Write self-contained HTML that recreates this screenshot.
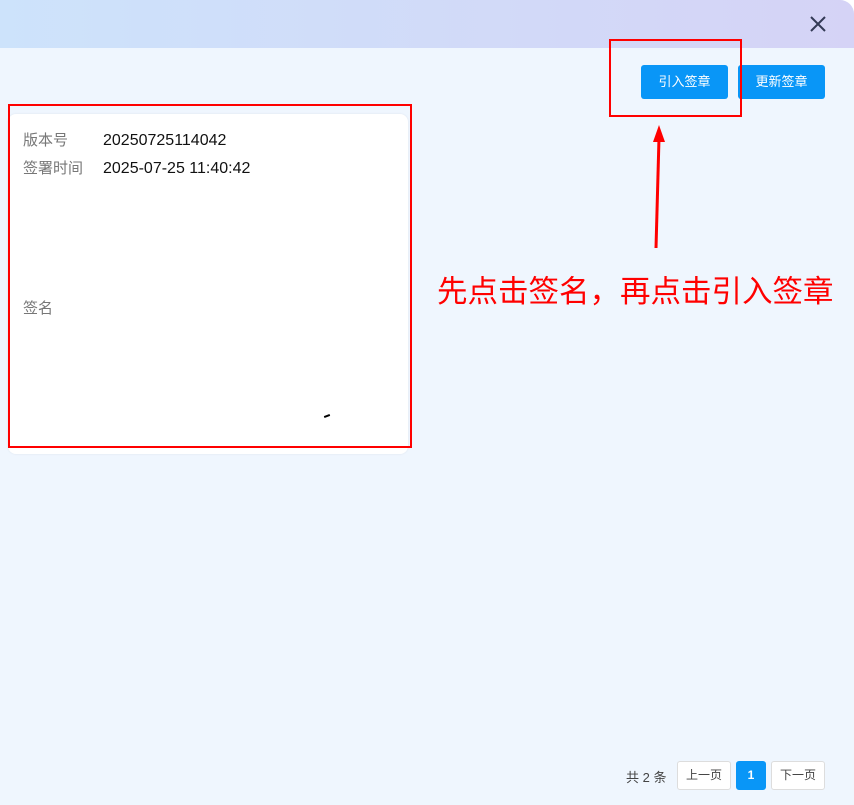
<!DOCTYPE html>
<html><head><meta charset="utf-8"><style>
*{margin:0;padding:0;box-sizing:border-box}
html,body{width:854px;height:805px;overflow:hidden;background:#fff}
body{font-family:"Liberation Sans","Noto Sans CJK SC",sans-serif;position:relative}
.dlg{position:absolute;left:0;top:0;width:854px;height:805px;background:#eff6fe;border-top-right-radius:14px;overflow:hidden}
.hd{position:absolute;left:0;top:0;width:854px;height:48px;background:linear-gradient(90deg,#cde3fb,#d5d3f6)}
.btn{position:absolute;top:65px;height:34px;background:#0996f7;color:#fff;font-size:13px;border-radius:3px;text-align:center;line-height:34px}
.card{position:absolute;left:8px;top:114px;width:400px;height:340px;background:#fff;border-radius:8px;box-shadow:0 0 2px #dde4ee}
.lb{position:absolute;left:23px;color:#777;font-size:15px;line-height:20px}
.vl{position:absolute;left:103px;color:#111;font-size:16px;line-height:20px}
.rb{position:absolute;border:2px solid #f00}
.pg{position:absolute;top:761px;height:29px;border:1px solid #ddd;border-radius:3px;background:#fff;font-size:12px;color:#444;text-align:center;line-height:27px}
</style></head><body>
<div class="dlg">
<div class="hd"></div>
<svg style="position:absolute;left:808px;top:14px" width="20" height="20" viewBox="0 0 20 20"><path d="M3 3L17 17M17 3L3 17" stroke="#333a55" stroke-width="2"/></svg>
<div class="btn" style="left:641px;width:87px">引入签章</div>
<div class="btn" style="left:738px;width:87px">更新签章</div>
<div class="card"></div>
<div class="lb" style="top:131px">版本号</div><div class="vl" style="top:131px">20250725114042</div>
<div class="lb" style="top:159px">签署时间</div><div class="vl" style="top:159px">2025-07-25 11:40:42</div>
<div class="lb" style="top:299px">签名</div>
<div style="position:absolute;left:324px;top:415px;width:6px;height:2px;background:#000;transform:rotate(-20deg)"></div>
<div class="rb" style="left:8px;top:104px;width:404px;height:344px"></div>
<div class="rb" style="left:609px;top:39px;width:133px;height:78px"></div>
<svg style="position:absolute;left:640px;top:120px" width="40" height="135"><path d="M16 128L19 18" stroke="#f00" stroke-width="3"/><path d="M19 5L13 22L25 22Z" fill="#f00"/></svg>
<div style="position:absolute;left:437px;top:267px;color:#f00;font-size:30.5px;white-space:nowrap">先点击签名，再点击引入签章</div>
<div style="position:absolute;left:626px;top:767px;font-size:13px;color:#444">共 2 条</div>
<div class="pg" style="left:677px;width:54px">上一页</div>
<div class="pg" style="left:736px;width:30px;background:#0996f7;border-color:#0996f7;color:#fff;font-weight:bold">1</div>
<div class="pg" style="left:771px;width:54px">下一页</div>
</div>
</body></html>
